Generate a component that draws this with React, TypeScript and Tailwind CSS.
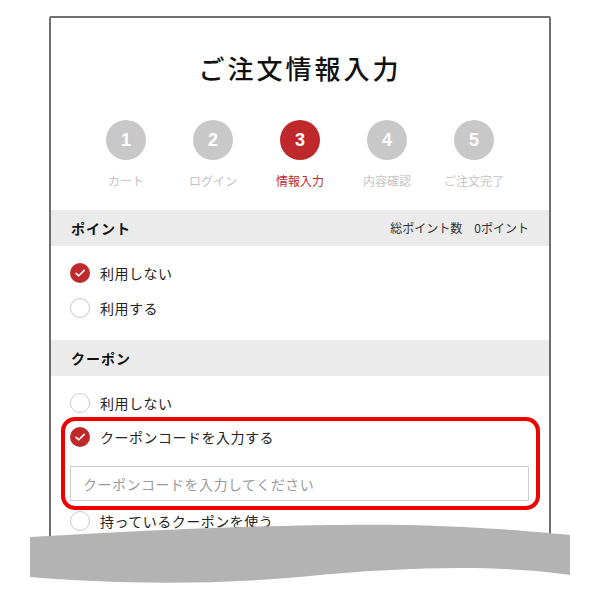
import React from "react";

const jp = "font-['Noto_Sans_CJK_JP','Noto_Sans',sans-serif]";

const steps = [
    { no: "1", label: "カート" },
    { no: "2", label: "ログイン" },
    { no: "3", label: "情報入力", active: true },
    { no: "4", label: "内容確認" },
    { no: "5", label: "ご注文完了" },
];

function Radio({ checked }: { checked?: boolean }) {
    return checked ? (
        <span className="flex h-5 w-5 shrink-0 items-center justify-center rounded-full bg-[#c0292b]">
            <svg width="20" height="20" viewBox="0 0 20 20" fill="none">
                <path
                    d="M6 10.4L8.8 12.8L14.2 7.4"
                    stroke="#fff"
                    strokeWidth="1.6"
                    strokeLinecap="round"
                    strokeLinejoin="round"
                />
            </svg>
        </span>
    ) : (
        <span className="block h-5 w-5 shrink-0 rounded-full border border-[#c9c9c9] bg-white" />
    );
}

function Option({ label, checked }: { label: string; checked?: boolean }) {
    return (
        <div className="flex h-5 items-center gap-[10px]">
            <Radio checked={checked} />
            <span className="text-[14px] leading-5 tracking-[0.5px] text-[#222]">{label}</span>
        </div>
    );
}

function SectionHeader({ title, right }: { title: string; right?: string }) {
    return (
        <div className="flex h-9 items-center justify-between bg-[#ebebeb] px-5">
            <span className="text-[14px] font-bold tracking-[1px] text-[#111]">{title}</span>
            {right && <span className="text-[12px] text-[#333]">{right}</span>}
        </div>
    );
}

export default function App() {
    return (
        <div className={`relative h-[600px] w-[600px] overflow-hidden bg-white ${jp}`}>
            <div className="mx-[49px] mt-4 h-[544px] overflow-hidden rounded-[2px] border-2 border-[#6f6f6f] bg-white">
                <h1 className="pt-[30px] text-center text-[26px] font-medium leading-[40px] tracking-[3px] text-[#111]">
                    ご注文情報入力
                </h1>

                <div className="mt-[32px] flex justify-center">
                    {steps.map((s) => (
                        <div key={s.no} className="flex w-[87px] flex-col items-center">
                            <div
                                className={
                                    s.active
                                        ? "flex h-10 w-10 items-center justify-center rounded-full bg-[#c0292b]"
                                        : "flex h-10 w-10 items-center justify-center rounded-full bg-[#c8c8c8]"
                                }
                            >
                                <span className="font-['Liberation_Sans',Arial,sans-serif] text-[18px] font-bold text-white">
                                    {s.no}
                                </span>
                            </div>
                            <span
                                className={
                                    s.active
                                        ? "mt-3 text-[12px] leading-[18px] text-[#c0292b]"
                                        : "mt-3 text-[12px] leading-[18px] text-[#c4c4c4]"
                                }
                            >
                                {s.label}
                            </span>
                        </div>
                    ))}
                </div>

                <div className="mt-5">
                    <SectionHeader title="ポイント" right="総ポイント数　0ポイント" />
                    <div className="flex flex-col gap-[15px] px-[19px] pb-[22px] pt-[17px]">
                        <Option label="利用しない" checked />
                        <Option label="利用する" />
                    </div>

                    <SectionHeader title="クーポン" />
                    <div className="flex flex-col px-[19px] pt-[17px]">
                        <Option label="利用しない" />
                        <div className="relative mt-[14px] mr-px">
                            <Option label="クーポンコードを入力する" checked />
                            <input
                                className="mt-[19px] block h-[35px] w-full border border-[#cfcfcf] bg-white px-3 text-[14px] tracking-[0.5px] text-[#333] outline-none placeholder:text-[#9a9a9a]"
                                placeholder="クーポンコードを入力してください"
                            />
                            <div className="pointer-events-none absolute -bottom-[9px] -left-[9px] -right-[11px] -top-[10px] rounded-[14px] border-4 border-[#ee0000]" />
                        </div>
                        <div className="mt-[10px]">
                            <Option label="持っているクーポンを使う" />
                        </div>
                    </div>
                </div>
            </div>

            {/* torn-paper wave over the bottom of the card */}
            <svg
                className="absolute left-0 top-[500px]"
                width="600"
                height="100"
                viewBox="0 500 600 100"
            >
                <path
                    d="M30 537 C150 530 300 523 410 525 C480 527 530 531 570 535 L570 575 C510 566 420 565 300 577 C200 586 100 583 30 577 Z"
                    fill="#b3b3b3"
                />
            </svg>
        </div>
    );
}
